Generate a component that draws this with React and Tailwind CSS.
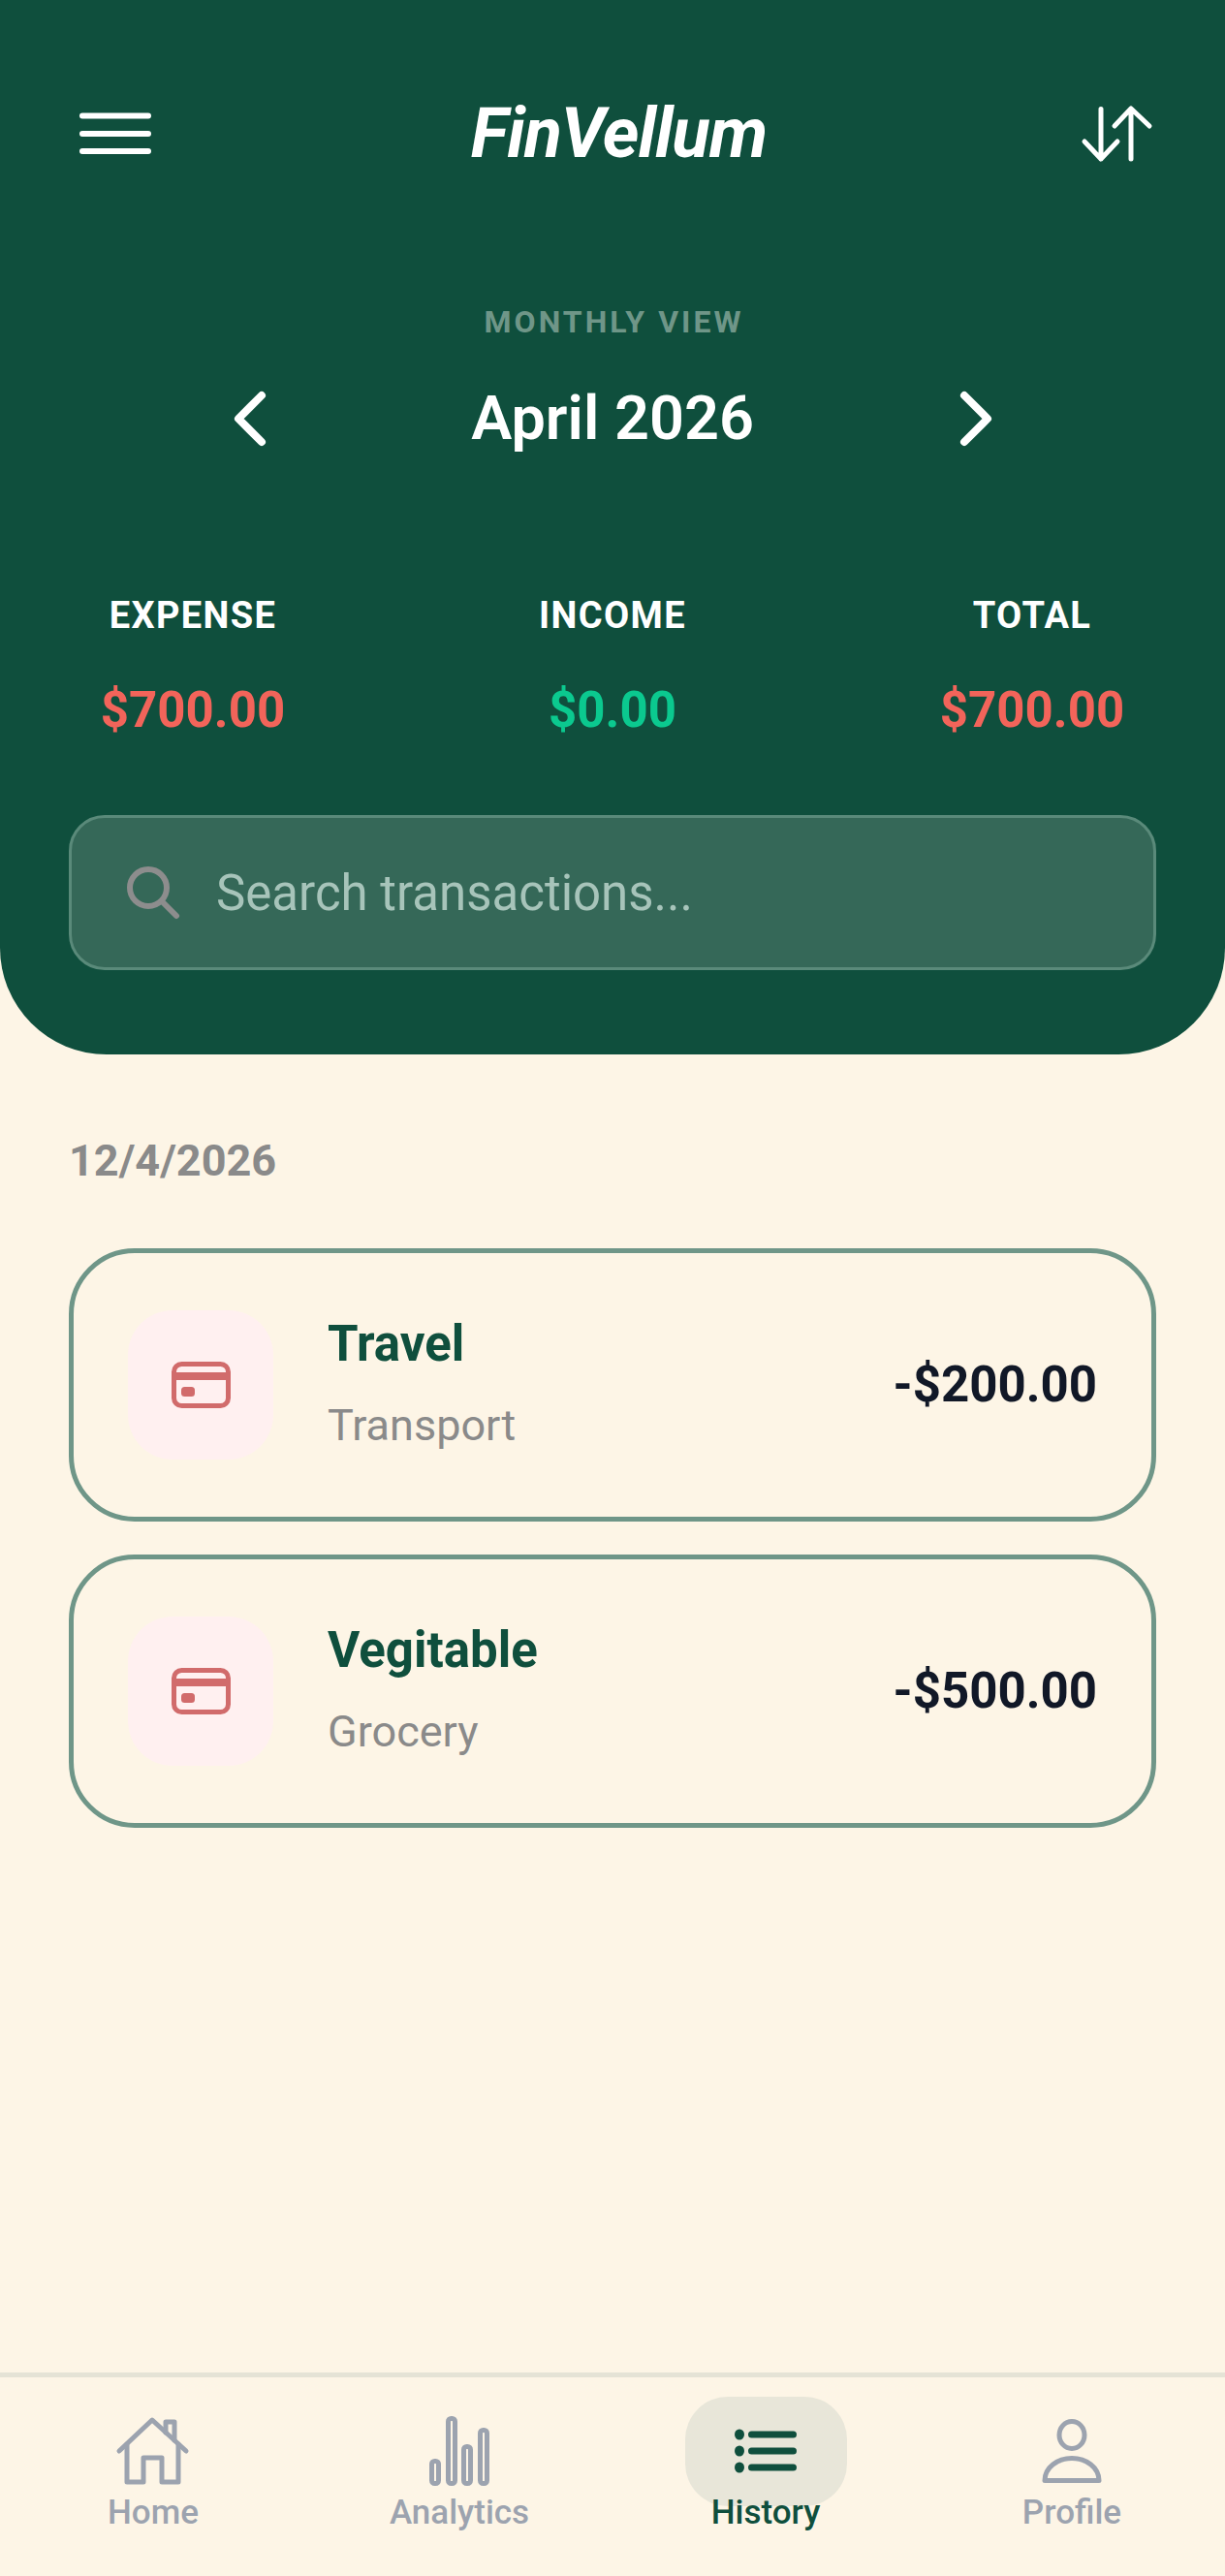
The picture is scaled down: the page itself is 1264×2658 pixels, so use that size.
const stats = [
  { label: 'EXPENSE', value: '$700.00', color: 'text-[#f2645a]' },
  { label: 'INCOME', value: '$0.00', color: 'text-[#0bc98f]' },
  { label: 'TOTAL', value: '$700.00', color: 'text-[#f2645a]' },
];

const transactions = [
  { title: 'Travel', category: 'Transport', amount: '-$200.00' },
  { title: 'Vegitable', category: 'Grocery', amount: '-$500.00' },
];

const CardIcon = () => (
  <svg width="61" height="48" viewBox="0 0 61 48" fill="none" className="text-[#d16b6b]">
    <rect x="2.5" y="2.5" width="56" height="43" rx="8" stroke="currentColor" strokeWidth="5" />
    <rect x="2" y="11" width="57" height="8" fill="currentColor" />
    <rect x="10" y="26" width="14" height="10" rx="3.5" fill="currentColor" />
  </svg>
);

const HomeIcon = () => (
  <svg width="80" height="80" viewBox="0 0 80 80" fill="none" stroke="currentColor" strokeWidth="5" strokeLinecap="round" strokeLinejoin="round">
    <path d="M5 39 39 7l35 32" />
    <path d="M13 32v39h17V46h19v25h17V32" />
    <path d="M53 20V9h9v19" />
  </svg>
);

const AnalyticsIcon = () => (
  <svg width="80" height="80" viewBox="0 0 80 80" fill="none" stroke="currentColor" strokeWidth="5">
    <rect x="11.5" y="49.5" width="7" height="23" rx="3" />
    <rect x="28.5" y="5.5" width="7" height="67" rx="3" />
    <rect x="44.5" y="34.5" width="7" height="38" rx="3" />
    <rect x="61.5" y="17.5" width="7" height="55" rx="3" />
  </svg>
);

const HistoryIcon = () => (
  <svg width="80" height="80" viewBox="0 0 80 80" fill="none" stroke="currentColor" strokeWidth="7" strokeLinecap="round">
    <path d="M25.5 22h43M25.5 39h43M25.5 56h43" />
    <ellipse cx="13" cy="22" rx="5" ry="5.5" fill="currentColor" stroke="none" />
    <ellipse cx="13" cy="39" rx="5" ry="5.5" fill="currentColor" stroke="none" />
    <ellipse cx="13" cy="56" rx="5" ry="5.5" fill="currentColor" stroke="none" />
  </svg>
);

const ProfileIcon = () => (
  <svg width="80" height="80" viewBox="0 0 80 80" fill="none" stroke="currentColor" strokeWidth="5" strokeLinejoin="round">
    <ellipse cx="40" cy="22.5" rx="13" ry="14" />
    <path d="M12 69.5C12 56 25 46.5 40 46.5S68 56 68 69.5Z" />
  </svg>
);

const navItems = [
  { label: 'Home', icon: HomeIcon },
  { label: 'Analytics', icon: AnalyticsIcon },
  { label: 'History', icon: HistoryIcon, active: true },
  { label: 'Profile', icon: ProfileIcon },
];

export default function App() {
  return (
    <div className="flex h-[2658px] flex-col bg-[#fdf5e6] font-['Roboto',sans-serif]">
      <header className="rounded-b-[110px] bg-[#0f4f3d] pt-[98px] pb-[87px]">
        <div className="flex items-center justify-between pl-[79px] pr-[72px]">
          <svg width="80" height="80" viewBox="0 0 80 80" fill="none" stroke="#fff" strokeWidth="6" strokeLinecap="round">
            <path d="M6 21.5h68M6 40h68M6 58h68" />
          </svg>
          <h1 className="ml-[6px] text-[72px] leading-[80px] font-bold italic tracking-[-1px] text-white">FinVellum</h1>
          <svg width="80" height="80" viewBox="0 0 80 80" fill="none" stroke="#fff" strokeWidth="5" strokeLinecap="round" strokeLinejoin="round">
            <path d="M24 14.5V66M7 48l17 18 17-18" />
            <path d="M55 14.5V66M38 32l17-18 19 18" />
          </svg>
        </div>

        <p className="mt-[136px] ml-[3px] text-center text-[32px] leading-[36px] font-bold tracking-[3px] text-[#6f9688]">MONTHLY VIEW</p>

        <div className="mx-auto mt-[44px] flex w-[809px] items-center justify-between">
          <svg width="60" height="60" viewBox="0 0 60 60" fill="none" stroke="#fff" strokeWidth="8" strokeLinecap="round" strokeLinejoin="round">
            <path d="M42 6 18 30l24 24" />
          </svg>
          <h2 className="text-[63px] leading-[76px] font-semibold text-white">April 2026</h2>
          <svg width="60" height="60" viewBox="0 0 60 60" fill="none" stroke="#fff" strokeWidth="8" strokeLinecap="round" strokeLinejoin="round">
            <path d="m18 6 24 24-24 24" />
          </svg>
        </div>

        <div className="mt-[143px] flex justify-between px-[106px]">
          {stats.map((s) => (
            <div key={s.label} className="flex w-[186px] flex-col items-center">
              <span className="text-[38px] leading-[44px] font-bold tracking-[1.4px] whitespace-nowrap text-white">{s.label}</span>
              <span className={`mt-[46px] text-[51px] leading-[60px] font-bold whitespace-nowrap ${s.color}`}>{s.value}</span>
            </div>
          ))}
        </div>

        <div className="mx-[71px] mt-[78px] flex h-[160px] items-center rounded-[37px] border-[3px] border-[#5a8a7a] bg-[#356858] pl-[56px]">
          <svg width="56" height="56" viewBox="0 0 56 56" fill="none" stroke="#8d8d8d" strokeWidth="6" strokeLinecap="round">
            <circle cx="23" cy="23" r="19" />
            <path d="m37 37 15 15" />
          </svg>
          <span className="mt-[2px] ml-[37px] text-[51px] leading-[60px] text-[#a7c4ba]">Search transactions...</span>
        </div>
      </header>

      <main className="flex-1 px-[71px]">
        <p className="mt-[84px] text-[45px] leading-[52px] font-bold text-[#8a8a8a]">12/4/2026</p>
        <ul className="mt-[64px] flex flex-col gap-[34px]">
          {transactions.map((t) => (
            <li key={t.title} className="flex h-[282px] items-center rounded-[68px] border-[5px] border-[#6f9688] pr-[56px] pl-[56px]">
              <div className="flex h-[154px] w-[150px] items-center justify-center rounded-[46px] bg-[#fff0f0]">
                <CardIcon />
              </div>
              <div className="ml-[56px] flex-1">
                <p className="-mt-[4px] text-[51px] leading-[60px] font-bold text-[#0f4f3d]">{t.title}</p>
                <p className="mt-[28px] text-[45px] leading-[52px] text-[#8a8a8a]">{t.category}</p>
              </div>
              <span className="text-[51px] leading-[60px] font-bold text-[#111827]">{t.amount}</span>
            </li>
          ))}
        </ul>
      </main>

      <nav className="grid h-[210px] grid-cols-4 border-t-[5px] border-[#e5e3d6] pt-[20px]">
        {navItems.map(({ label, icon: Icon, active }) => (
          <div key={label} className={`flex flex-col items-center ${active ? 'text-[#0f4f3d]' : 'text-[#9ca3af]'}`}>
            <div className={`flex h-[113px] w-[167px] items-center justify-center rounded-[44px] ${active ? 'bg-[#e8e6d9]' : ''}`}>
              <Icon />
            </div>
            <span className="-mt-[13px] text-[35px] leading-[40px] font-medium">{label}</span>
          </div>
        ))}
      </nav>
    </div>
  );
}
